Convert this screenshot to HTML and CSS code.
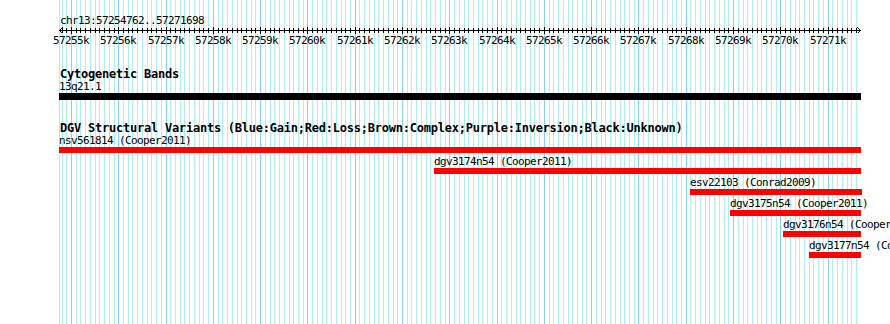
FILE: index.html
```html
<!DOCTYPE html>
<html lang="en">
<head>
    <meta charset="UTF-8">
    <meta name="viewport" content="width=device-width, initial-scale=1.0">
    <title>chr13:57254762..57271698</title>
    <link rel="stylesheet" href="styles.css">
</head>
<body>
<div class="panel">
    <svg class="grid" id="grid" width="890" height="324"></svg>

    <div class="ruler">
        <div class="ruler-title">chr13:57254762..57271698</div>
        <svg class="ruler-axis" id="axis" width="890" height="7"></svg>
        <div class="ruler-labels" id="labels"></div>
    </div>

    <div class="track">
        <div class="track-title">Cytogenetic Bands</div>
        <div class="feature-row">
            <div class="feature" style="margin-left: 59px; width: 802px;">
                <div class="feature-label">13q21.1</div>
                <div class="bar band"></div>
            </div>
        </div>
    </div>

    <div class="track dgv">
        <div class="track-title">DGV Structural Variants (Blue:Gain;Red:Loss;Brown:Complex;Purple:Inversion;Black:Unknown)</div>
        <div class="feature-row">
            <div class="feature" style="margin-left: 59px; width: 802px;">
                <div class="feature-label">nsv561814 (Cooper2011)</div>
                <div class="bar"></div>
            </div>
        </div>
        <div class="feature-row">
            <div class="feature" style="margin-left: 434px; width: 427px;">
                <div class="feature-label">dgv3174n54 (Cooper2011)</div>
                <div class="bar"></div>
            </div>
        </div>
        <div class="feature-row">
            <div class="feature" style="margin-left: 690px; width: 172px;">
                <div class="feature-label">esv22103 (Conrad2009)</div>
                <div class="bar"></div>
            </div>
        </div>
        <div class="feature-row">
            <div class="feature" style="margin-left: 730px; width: 131px;">
                <div class="feature-label">dgv3175n54 (Cooper2011)</div>
                <div class="bar"></div>
            </div>
        </div>
        <div class="feature-row">
            <div class="feature" style="margin-left: 783px; width: 78px;">
                <div class="feature-label">dgv3176n54 (Cooper2011)</div>
                <div class="bar"></div>
            </div>
        </div>
        <div class="feature-row">
            <div class="feature" style="margin-left: 809px; width: 52px;">
                <div class="feature-label">dgv3177n54 (Cooper2011)</div>
                <div class="bar"></div>
            </div>
        </div>
    </div>
</div>

<script>
    var start = 57254762;
    var end = 57271698;

    // 57255k sits on x=71, ~47.3px per kb
    function px(bp) {
        return Math.round(71 + (bp - 57255000) * 0.04729);
    }

    // background grid
    var grid = '<line class="minor" x1="59.5" y1="0" x2="59.5" y2="324"/>';
    for (var bp = 57254800; bp < end; bp += 100) {
        var x = px(bp) + 0.5;
        var cls = bp % 1000 == 0 ? 'major' : 'minor';
        grid += `<line class="${cls}" x1="${x}" y1="0" x2="${x}" y2="324"/>`;
    }
    document.getElementById('grid').innerHTML = grid;

    // ruler axis with ticks + arrows
    var axis = '<line x1="59" y1="3.5" x2="861" y2="3.5"/>';
    axis += '<polyline points="62.5,0.5 59.5,3.5 62.5,6.5"/>';
    axis += '<polyline points="857.5,0.5 860.5,3.5 857.5,6.5"/>';
    for (var bp = 57254800; bp < end; bp += 100) {
        var x = px(bp) + 0.5;
        if (bp % 1000 == 0) {
            axis += `<line x1="${x}" y1="0" x2="${x}" y2="7"/>`;
        } else {
            axis += `<line x1="${x}" y1="1" x2="${x}" y2="6"/>`;
        }
    }
    document.getElementById('axis').innerHTML = axis;

    var labels = '';
    for (var kb = 57255; kb * 1000 < end; kb++) {
        labels += `<div class="tick-label" style="left: ${px(kb * 1000)}px;">${kb}k</div>`;
    }
    document.getElementById('labels').innerHTML = labels;
</script>
</body>
</html>
```

FILE: styles.css
```css
* {
    margin: 0;
    padding: 0;
    box-sizing: border-box;
}

body {
    background: #ffffff;
    color: #000000;
    font-family: "DejaVu Sans Mono", "Liberation Mono", monospace;
    font-size: 11px;
    letter-spacing: -0.62px;
    overflow: hidden;
}

.panel {
    position: relative;
    width: 890px;
    height: 324px;
    padding-top: 14px;
    overflow: hidden;
}

.grid {
    position: absolute;
    top: 0;
    left: 0;
    shape-rendering: crispEdges;
}
.grid .minor {
    stroke: #afeeee;
}
.grid .major {
    stroke: #87cefa;
}

.ruler,
.track {
    position: relative;
}

.ruler-title {
    line-height: 13px;
    padding-left: 60px;
}

.ruler-axis {
    display: block;
    shape-rendering: crispEdges;
}
.ruler-axis line,
.ruler-axis polyline {
    stroke: #000000;
    fill: none;
}

.ruler-labels {
    position: relative;
    height: 13px;
    line-height: 13px;
}
.tick-label {
    position: absolute;
    top: 0;
    transform: translateX(-50%);
}

.track {
    margin-top: 21px;
}
.track.dgv {
    margin-top: 22px;
}

.track-title {
    font-size: 12px;
    font-weight: bold;
    letter-spacing: -0.23px;
    line-height: 12px;
    padding-left: 60px;
    white-space: nowrap;
}

.feature-row {
    display: flex;
    margin-bottom: 2px;
}

.feature-label {
    line-height: 13px;
    white-space: nowrap;
}

.bar {
    height: 6px;
    background: #ff0000;
}
.bar.band {
    height: 7px;
    background: #000000;
}
```
